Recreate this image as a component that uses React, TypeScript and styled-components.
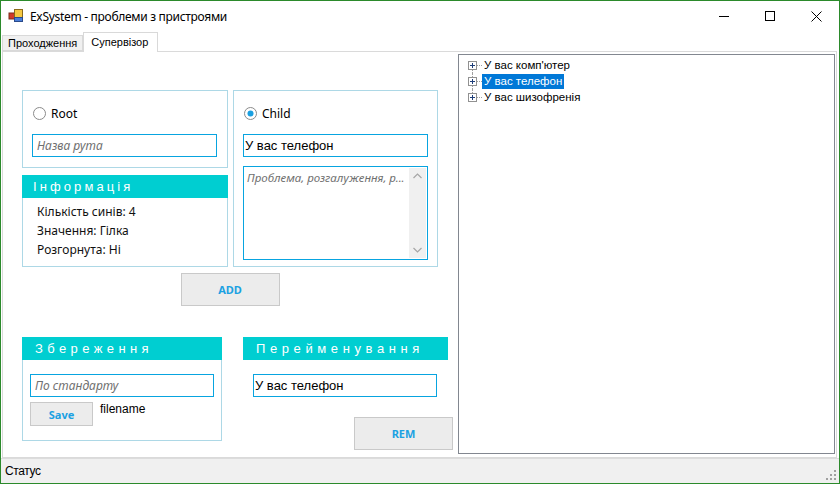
import React from 'react';
import styled, { createGlobalStyle } from 'styled-components';

const Global = createGlobalStyle`
  html, body { margin: 0; padding: 0; background: #fff; }
  body { font-family: "Liberation Sans", Arial, sans-serif; }
  * { box-sizing: border-box; }
`;

const Window = styled.div`
  width: 840px;
  height: 484px;
  border: 1px solid #2b8a2b;
  display: flex;
  flex-direction: column;
  background: #fff;
  overflow: hidden;
`;

const TitleBar = styled.div`
  height: 30px;
  flex: none;
  display: flex;
  align-items: center;
  padding-left: 7px;
`;

const TitleText = styled.span`
  font-family: "Noto Sans", sans-serif;
  font-size: 12px;
  color: #000;
  margin-left: 6px;
  letter-spacing: -0.3px;
`;

const WinButtons = styled.div`
  margin-left: auto;
  display: flex;
  height: 100%;
`;

const WinButton = styled.div`
  width: 46px;
  height: 100%;
  display: flex;
  align-items: center;
  justify-content: center;
`;

const TabStrip = styled.div`
  height: 20px;
  flex: none;
  display: flex;
  align-items: flex-end;
  padding-left: 1px;
  position: relative;
  z-index: 1;
`;

const Tab = styled.div<{ $active?: boolean }>`
  font-family: "Liberation Sans", Arial, sans-serif;
  font-size: 11px;
  color: #000;
  display: flex;
  align-items: center;
  border: 1px solid #d9d9d9;
  border-bottom: ${(p) => (p.$active ? 'none' : '1px solid #d9d9d9')};
  background: ${(p) => (p.$active ? '#fff' : '#f0f0f0')};
  height: ${(p) => (p.$active ? '20px' : '16px')};
  margin-bottom: ${(p) => (p.$active ? '-1px' : '0')};
  padding: ${(p) => (p.$active ? '0 9px 1px 7px' : '0 5px 0 5px')};
`;

const TabPanel = styled.div`
  flex: 1;
  margin: 0 2px 0 1px;
  border: 1px solid #dadada;
  display: flex;
  padding: 2px 1px 3px 19px;
  min-height: 0;
`;

const LeftArea = styled.div`
  width: 436px;
  flex: none;
  margin-top: 36px;
  display: flex;
  flex-direction: column;
`;

const TopRow = styled.div`
  display: grid;
  grid-template-columns: 206px 205px;
  column-gap: 5px;
  width: 416px;
`;

const Column = styled.div`
  display: flex;
  flex-direction: column;
`;

const Box = styled.div<{ $h: number; $noTop?: boolean }>`
  height: ${(p) => p.$h}px;
  border: 1px solid #add8e6;
  border-top: ${(p) => (p.$noTop ? 'none' : '1px solid #add8e6')};
  display: flex;
  flex-direction: column;
  align-items: flex-start;
`;

const BoxInner = styled.div<{ $pt: number; $pl: number }>`
  padding: ${(p) => p.$pt}px 0 0 ${(p) => p.$pl}px;
  display: flex;
  flex-direction: column;
  align-items: flex-start;
`;

const RadioRow = styled.label`
  display: flex;
  align-items: center;
  height: 16px;
  gap: 5px;
  margin-left: 1px;
  font-family: "Noto Sans", sans-serif;
  font-size: 12px;
  color: #000;
`;

const Input = styled.div<{ $w: number; $ph?: boolean }>`
  width: ${(p) => p.$w}px;
  height: 23px;
  border: 1px solid #08a4e0;
  display: flex;
  align-items: center;
  padding-left: ${(p) => (p.$ph ? '4px' : '1px')};
  font-family: ${(p) => (p.$ph ? '"Noto Sans", sans-serif' : '"Liberation Sans", Arial, sans-serif')};
  font-size: ${(p) => (p.$ph ? '12px' : '13px')};
  font-style: ${(p) => (p.$ph ? 'italic' : 'normal')};
  color: ${(p) => (p.$ph ? '#707070' : '#000')};
  background: #fff;
  white-space: nowrap;
  overflow: hidden;
`;

const Header = styled.div<{ $w: number; $ls: number; $pl: number }>`
  width: ${(p) => p.$w}px;
  height: 23px;
  background: #00ced1;
  color: #fff;
  display: flex;
  align-items: center;
  padding-left: ${(p) => p.$pl}px;
  font-family: "Liberation Sans", Arial, sans-serif;
  font-size: 13px;
  letter-spacing: ${(p) => p.$ls}px;
  flex: none;
`;

const InfoLine = styled.div`
  font-family: "Noto Sans", sans-serif;
  font-size: 12px;
  color: #111;
  height: 19px;
  line-height: 19px;
`;

const TextArea = styled.div`
  width: 185px;
  height: 94px;
  margin-top: 9px;
  border: 1px solid #08a4e0;
  display: flex;
`;

const TextAreaText = styled.div`
  flex: 1;
  min-width: 0;
  padding: 3px 0 0 3px;
  font-family: "Noto Sans", sans-serif;
  font-size: 11.5px;
  font-style: italic;
  color: #707070;
  white-space: nowrap;
`;

const ScrollTrack = styled.div`
  width: 17px;
  flex: none;
  margin: 1px 1px 1px 0;
  background: #f0f0f0;
  display: flex;
  flex-direction: column;
  justify-content: space-between;
  align-items: center;
  padding: 5px 0 5px;
`;

const Button = styled.div<{ $w: number; $h: number }>`
  width: ${(p) => p.$w}px;
  height: ${(p) => p.$h}px;
  background: #ececec;
  border: 1px solid #c9c9c9;
  display: flex;
  align-items: center;
  justify-content: center;
  font-family: "Noto Sans", sans-serif;
  font-weight: 700;
  font-size: 11px;
  color: #1ba1e2;
  flex: none;
`;

const AddRow = styled.div`
  width: 416px;
  display: flex;
  justify-content: center;
  margin-top: 6px;
`;

const BottomRow = styled.div`
  display: flex;
  gap: 21px;
  margin-top: 31px;
  align-items: flex-start;
`;

const SaveRow = styled.div`
  display: flex;
  align-items: flex-start;
  gap: 7px;
  margin-top: 5px;
`;

const FileName = styled.span`
  font-family: "Liberation Sans", Arial, sans-serif;
  font-size: 12px;
  color: #000;
  line-height: 14px;
`;

const RenameCol = styled.div`
  width: 210px;
  display: flex;
  flex-direction: column;
  align-items: flex-start;
`;

const RenameInputWrap = styled.div`
  margin: 14px 0 0 10px;
`;

const RemWrap = styled.div`
  align-self: flex-end;
  margin-top: 20px;
`;

const Tree = styled.div`
  flex: 1;
  border: 1px solid #828790;
  padding: 2px 0 0 9px;
  background: #fff;
`;

const TreeRow = styled.div`
  display: flex;
  align-items: center;
  height: 16px;
`;

const ExpCell = styled.div`
  width: 9px;
  height: 16px;
  display: flex;
  flex-direction: column;
  flex: none;
`;

const VLine = styled.div<{ $show: boolean }>`
  flex: 1;
  margin-left: 4px;
  border-left: ${(p) => (p.$show ? '1px dotted #a0a0a0' : 'none')};
`;

const ExpBox = styled.div`
  width: 9px;
  height: 9px;
  border: 1px solid #919191;
  background: #fff;
  flex: none;
  display: flex;
  align-items: center;
  justify-content: center;
`;

const HLine = styled.div`
  width: 5px;
  border-top: 1px dotted #a0a0a0;
  flex: none;
`;

const TreeLabel = styled.span<{ $sel?: boolean }>`
  font-family: "Liberation Sans", Arial, sans-serif;
  font-size: 11.5px;
  padding: 0 2px;
  height: 15px;
  line-height: 15px;
  color: ${(p) => (p.$sel ? '#fff' : '#000')};
  background: ${(p) => (p.$sel ? '#0078d7' : 'transparent')};
`;

const StatusBar = styled.div`
  height: 25px;
  flex: none;
  background: #f0f0f0;
  border-top: 1px solid #dcdcdc;
  display: flex;
  align-items: center;
  padding-left: 4px;
  font-family: "Liberation Sans", Arial, sans-serif;
  font-size: 12px;
  letter-spacing: -0.4px;
  color: #000;
  position: relative;
`;

const Grip = styled.svg`
  position: absolute;
  right: 2px;
  bottom: 2px;
`;

const Radio: React.FC<{ checked?: boolean }> = ({ checked }) => (
  <svg width="13" height="13" viewBox="0 0 13 13">
    <circle cx="6.5" cy="6.5" r="6" fill="#fff" stroke="#8a8a8a" strokeWidth="1" />
    {checked && <circle cx="6.5" cy="6.5" r="3" fill="#1a9fe0" />}
  </svg>
);

const TreeItem: React.FC<{ label: string; first?: boolean; last?: boolean; sel?: boolean }> = ({
  label,
  first,
  last,
  sel,
}) => (
  <TreeRow>
    <ExpCell>
      <VLine $show={!first} />
      <ExpBox>
        <svg width="7" height="7" viewBox="0 0 7 7">
          <path d="M1 3.5H6M3.5 1V6" stroke="#1f3f7a" strokeWidth="1" shapeRendering="crispEdges" />
        </svg>
      </ExpBox>
      <VLine $show={!last} />
    </ExpCell>
    <HLine />
    <TreeLabel $sel={sel}>{label}</TreeLabel>
  </TreeRow>
);

const AppIcon = () => (
  <svg width="16" height="16" viewBox="0 0 16 16">
    <rect x="1" y="5" width="6" height="6" fill="#d23a2a" stroke="#7a2a1a" strokeWidth="1" />
    <rect x="6.5" y="1.5" width="8" height="8" fill="#f5c842" stroke="#8a6a1a" strokeWidth="1" />
    <rect x="6.5" y="9.5" width="8" height="4" fill="#4a7ed8" stroke="#2a4a8a" strokeWidth="1" />
  </svg>
);

export default function App() {
  return (
    <>
      <Global />
      <Window>
        <TitleBar>
          <AppIcon />
          <TitleText>ExSystem - проблеми з пристроями</TitleText>
          <WinButtons>
            <WinButton>
              <svg width="10" height="10" viewBox="0 0 10 10">
                <path d="M0 5.5H10" stroke="#000" strokeWidth="1" shapeRendering="crispEdges" />
              </svg>
            </WinButton>
            <WinButton>
              <svg width="10" height="10" viewBox="0 0 10 10">
                <rect x="0.5" y="0.5" width="9" height="9" fill="none" stroke="#000" strokeWidth="1" shapeRendering="crispEdges" />
              </svg>
            </WinButton>
            <WinButton>
              <svg width="11" height="11" viewBox="0 0 11 11">
                <path d="M0.5 0.5L10.5 10.5M10.5 0.5L0.5 10.5" stroke="#000" strokeWidth="1" />
              </svg>
            </WinButton>
          </WinButtons>
        </TitleBar>
        <TabStrip>
          <Tab>Проходження</Tab>
          <Tab $active>Супервізор</Tab>
        </TabStrip>
        <TabPanel>
          <LeftArea>
            <TopRow>
              <Column>
                <Box $h={78}>
                  <BoxInner $pt={14} $pl={9}>
                    <RadioRow>
                      <Radio />
                      Root
                    </RadioRow>
                    <div style={{ height: 13 }} />
                    <Input $w={185} $ph>
                      Назва рута
                    </Input>
                  </BoxInner>
                </Box>
                <div style={{ height: 7 }} />
                <Header $w={206} $ls={3.1} $pl={11}>
                  Інформація
                </Header>
                <Box $h={69} $noTop>
                  <BoxInner $pt={4} $pl={14}>
                    <InfoLine>Кількість синів: 4</InfoLine>
                    <InfoLine>Значення: Гілка</InfoLine>
                    <InfoLine>Розгорнута: Ні</InfoLine>
                  </BoxInner>
                </Box>
              </Column>
              <Column>
                <Box $h={177}>
                  <BoxInner $pt={14} $pl={9}>
                    <RadioRow>
                      <Radio checked />
                      Child
                    </RadioRow>
                    <div style={{ height: 13 }} />
                    <Input $w={185}>У вас телефон</Input>
                    <TextArea>
                      <TextAreaText>Проблема, розгалуження, р...</TextAreaText>
                      <ScrollTrack>
                        <svg width="9" height="6" viewBox="0 0 9 6">
                          <path d="M0.5 5L4.5 1L8.5 5" fill="none" stroke="#a6a6a6" strokeWidth="1.2" />
                        </svg>
                        <svg width="9" height="6" viewBox="0 0 9 6">
                          <path d="M0.5 1L4.5 5L8.5 1" fill="none" stroke="#a6a6a6" strokeWidth="1.2" />
                        </svg>
                      </ScrollTrack>
                    </TextArea>
                  </BoxInner>
                </Box>
              </Column>
            </TopRow>
            <AddRow>
              <Button $w={99} $h={33}>ADD</Button>
            </AddRow>
            <BottomRow>
              <Column>
                <Header $w={200} $ls={4.4} $pl={13}>
                  Збереження
                </Header>
                <Box $h={81} $noTop>
                  <BoxInner $pt={14} $pl={7}>
                    <Input $w={184} $ph>
                      По стандарту
                    </Input>
                    <SaveRow>
                      <Button $w={63} $h={24}>Save</Button>
                      <FileName>filename</FileName>
                    </SaveRow>
                  </BoxInner>
                </Box>
              </Column>
              <RenameCol>
                <Header $w={205} $ls={4.6} $pl={13}>
                  Перейменування
                </Header>
                <RenameInputWrap>
                  <Input $w={184}>У вас телефон</Input>
                </RenameInputWrap>
                <RemWrap>
                  <Button $w={99} $h={33}>REM</Button>
                </RemWrap>
              </RenameCol>
            </BottomRow>
          </LeftArea>
          <Tree>
            <TreeItem label="У вас комп'ютер" first />
            <TreeItem label="У вас телефон" sel />
            <TreeItem label="У вас шизофренія" last />
          </Tree>
        </TabPanel>
        <StatusBar>
          Статус
          <Grip width="12" height="12" viewBox="0 0 12 12">
            <g fill="#a0a0a0">
              <rect x="9" y="1" width="2" height="2" />
              <rect x="9" y="5" width="2" height="2" />
              <rect x="9" y="9" width="2" height="2" />
              <rect x="5" y="5" width="2" height="2" />
              <rect x="5" y="9" width="2" height="2" />
              <rect x="1" y="9" width="2" height="2" />
            </g>
          </Grip>
        </StatusBar>
      </Window>
    </>
  );
}
